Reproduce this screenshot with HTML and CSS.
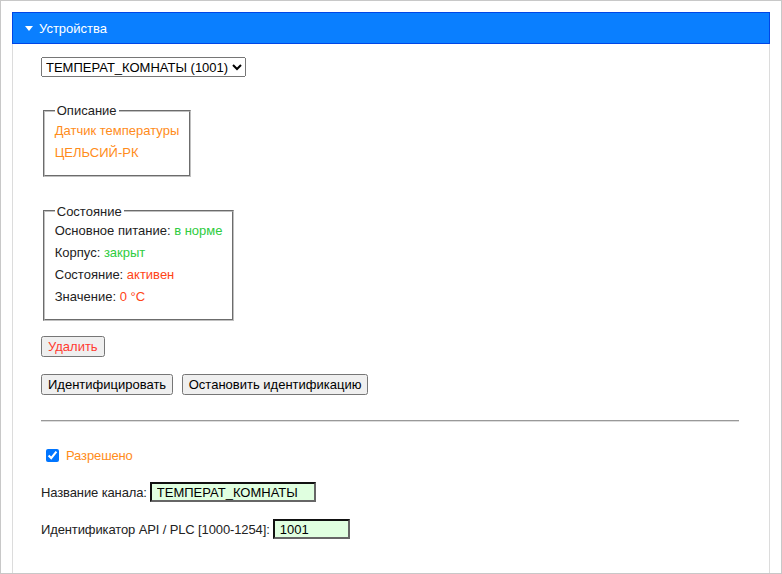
FILE: index.html
```html
<!DOCTYPE html>
<html lang="ru">

<head>
    <meta charset="UTF-8">
    <meta name="viewport" content="width=device-width, initial-scale=1.0">
    <title>Устройства</title>
    <link rel="stylesheet" href="styles.css">
</head>

<body>
    <div class="frame">
        <div class="panel">
            <div class="panel-head">
                <span class="caret"></span>
                <span>Устройства</span>
            </div>
            <div class="panel-body">
                <select class="device-select">
                    <option>ТЕМПЕРАТ_КОМНАТЫ (1001)</option>
                </select>

                <div class="box-wrap">
                    <fieldset class="box">
                        <legend>Описание</legend>
                        <div class="line orange">Датчик температуры</div>
                        <div class="line orange">ЦЕЛЬСИЙ-РК</div>
                    </fieldset>
                </div>

                <div class="box-wrap box-wrap-2">
                    <fieldset class="box">
                        <legend>Состояние</legend>
                        <div class="line">Основное питание: <span class="green">в норме</span></div>
                        <div class="line">Корпус: <span class="green">закрыт</span></div>
                        <div class="line">Состояние: <span class="red">активен</span></div>
                        <div class="line">Значение: <span class="red">0 °C</span></div>
                    </fieldset>
                </div>

                <div class="btn-row">
                    <button type="button" class="btn btn-danger">Удалить</button>
                </div>
                <div class="btn-row">
                    <button type="button" class="btn">Идентифицировать</button>
                    <button type="button" class="btn">Остановить идентификацию</button>
                </div>

                <hr>

                <div class="row check-row">
                    <input type="checkbox" id="enabled" checked>
                    <label for="enabled" class="orange">Разрешено</label>
                </div>
                <div class="row">
                    <label for="chName">Название канала:</label>
                    <input type="text" id="chName" class="field field-name" value="ТЕМПЕРАТ_КОМНАТЫ">
                </div>
                <div class="row">
                    <label for="apiId">Идентификатор API / PLC [1000-1254]:</label>
                    <input type="text" id="apiId" class="field field-id" value="1001">
                </div>
            </div>
        </div>
    </div>
</body>

</html>
```

FILE: styles.css
```css
* {
    box-sizing: border-box;
}

body {
    margin: 0;
    font-family: "Liberation Sans", Arial, sans-serif;
    font-size: 13px;
    color: #222;
}

.frame {
    width: 782px;
    height: 574px;
    border: 1px solid #c8c8c8;
    padding: 11px 11px 11px 11px;
    overflow: hidden;
}

.panel {
    height: 600px;
    border-left: 1px solid #dcdcdc;
    border-right: 1px solid #dcdcdc;
}

.panel-head {
    height: 32px;
    margin: 0 -1px;
    background: #0a7fff;
    border: 1px solid #0046e6;
    color: #fff;
    display: flex;
    align-items: center;
    padding-left: 12px;
    font-size: 13px;
}

.caret {
    width: 0;
    height: 0;
    border-left: 4px solid transparent;
    border-right: 4px solid transparent;
    border-top: 5px solid #fff;
    margin-right: 6px;
}

.panel-body {
    padding: 13px 30px 0 28px;
}

.device-select {
    font-family: "Liberation Sans", Arial, sans-serif;
    font-size: 13px;
    height: 20px;
    color: #000;
}

.box-wrap {
    margin-top: 26px;
}

.box-wrap-2 {
    margin-top: 27px;
}

.box {
    display: inline-block;
    margin: 0 2px;
    padding: 4.5px 9.75px 8px;
    border: 2px groove #c0c0c0;
}

.box legend {
    padding: 0 2px;
    line-height: 15px;
}

.line {
    line-height: 16px;
    margin-bottom: 6px;
}

.orange {
    color: #ff8c1a;
}

.green {
    color: #2ecc40;
}

.red {
    color: #ff4416;
}

.btn-row {
    margin-top: 15px;
}

.btn-row + .btn-row {
    margin-top: 17px;
}

.btn {
    font-family: "Liberation Sans", Arial, sans-serif;
    font-size: 13px;
    height: 21px;
    padding: 1px 5px;
    margin-right: 5px;
    color: #000;
}

.btn-danger {
    color: #ff3b30;
}

hr {
    margin: 25px 0 0;
    border: 0;
    border-top: 1px solid #999;
    border-bottom: 1px solid #ddd;
}

.row {
    display: flex;
    align-items: center;
    margin-top: 17px;
}

.check-row {
    margin-top: 24px;
}

.check-row input {
    margin: 3px 7px 3px 5px;
}

.row label {
    margin-right: 3px;
    letter-spacing: -0.12px;
}

.field {
    font-family: "Liberation Sans", Arial, sans-serif;
    font-size: 13px;
    height: 20px;
    padding: 1px 5px;
    background: #e0ffe0;
    border: 2px inset #666;
    color: #000;
}

.field-name {
    width: 166px;
}

.field-id {
    width: 77px;
}
```
